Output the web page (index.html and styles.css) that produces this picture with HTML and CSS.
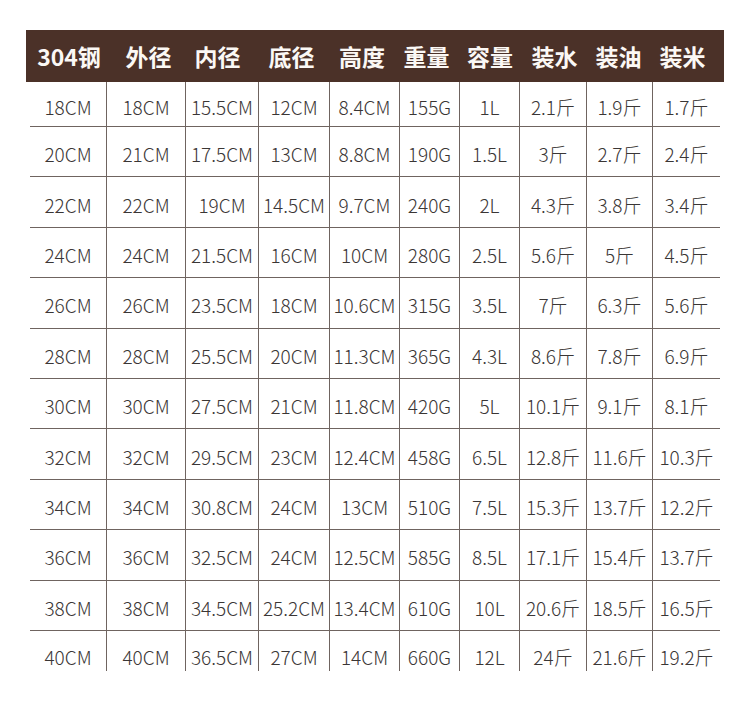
FILE: index.html
```html
<!DOCTYPE html>
<html lang="zh-CN">
<head>
<meta charset="utf-8">
<title>304钢 尺寸表</title>
<link rel="stylesheet" href="styles.css">
</head>
<body>
<div class="page">
  <div class="head">
    <div class="hc">304钢</div>
    <div class="hc">外径</div>
    <div class="hc">内径</div>
    <div class="hc">底径</div>
    <div class="hc">高度</div>
    <div class="hc">重量</div>
    <div class="hc">容量</div>
    <div class="hc">装水</div>
    <div class="hc">装油</div>
    <div class="hc">装米</div>
  </div>
  <div class="body">
    <div class="row first"><div class="c">18CM</div><div class="c">18CM</div><div class="c">15.5CM</div><div class="c">12CM</div><div class="c">8.4CM</div><div class="c">155G</div><div class="c">1L</div><div class="c">2.1斤</div><div class="c">1.9斤</div><div class="c">1.7斤</div></div>
    <div class="row"><div class="c">20CM</div><div class="c">21CM</div><div class="c">17.5CM</div><div class="c">13CM</div><div class="c">8.8CM</div><div class="c">190G</div><div class="c">1.5L</div><div class="c">3斤</div><div class="c">2.7斤</div><div class="c">2.4斤</div></div>
    <div class="row"><div class="c">22CM</div><div class="c">22CM</div><div class="c">19CM</div><div class="c">14.5CM</div><div class="c">9.7CM</div><div class="c">240G</div><div class="c">2L</div><div class="c">4.3斤</div><div class="c">3.8斤</div><div class="c">3.4斤</div></div>
    <div class="row"><div class="c">24CM</div><div class="c">24CM</div><div class="c">21.5CM</div><div class="c">16CM</div><div class="c">10CM</div><div class="c">280G</div><div class="c">2.5L</div><div class="c">5.6斤</div><div class="c">5斤</div><div class="c">4.5斤</div></div>
    <div class="row"><div class="c">26CM</div><div class="c">26CM</div><div class="c">23.5CM</div><div class="c">18CM</div><div class="c">10.6CM</div><div class="c">315G</div><div class="c">3.5L</div><div class="c">7斤</div><div class="c">6.3斤</div><div class="c">5.6斤</div></div>
    <div class="row"><div class="c">28CM</div><div class="c">28CM</div><div class="c">25.5CM</div><div class="c">20CM</div><div class="c">11.3CM</div><div class="c">365G</div><div class="c">4.3L</div><div class="c">8.6斤</div><div class="c">7.8斤</div><div class="c">6.9斤</div></div>
    <div class="row"><div class="c">30CM</div><div class="c">30CM</div><div class="c">27.5CM</div><div class="c">21CM</div><div class="c">11.8CM</div><div class="c">420G</div><div class="c">5L</div><div class="c">10.1斤</div><div class="c">9.1斤</div><div class="c">8.1斤</div></div>
    <div class="row"><div class="c">32CM</div><div class="c">32CM</div><div class="c">29.5CM</div><div class="c">23CM</div><div class="c">12.4CM</div><div class="c">458G</div><div class="c">6.5L</div><div class="c">12.8斤</div><div class="c">11.6斤</div><div class="c">10.3斤</div></div>
    <div class="row"><div class="c">34CM</div><div class="c">34CM</div><div class="c">30.8CM</div><div class="c">24CM</div><div class="c">13CM</div><div class="c">510G</div><div class="c">7.5L</div><div class="c">15.3斤</div><div class="c">13.7斤</div><div class="c">12.2斤</div></div>
    <div class="row"><div class="c">36CM</div><div class="c">36CM</div><div class="c">32.5CM</div><div class="c">24CM</div><div class="c">12.5CM</div><div class="c">585G</div><div class="c">8.5L</div><div class="c">17.1斤</div><div class="c">15.4斤</div><div class="c">13.7斤</div></div>
    <div class="row"><div class="c">38CM</div><div class="c">38CM</div><div class="c">34.5CM</div><div class="c">25.2CM</div><div class="c">13.4CM</div><div class="c">610G</div><div class="c">10L</div><div class="c">20.6斤</div><div class="c">18.5斤</div><div class="c">16.5斤</div></div>
    <div class="row last"><div class="c">40CM</div><div class="c">40CM</div><div class="c">36.5CM</div><div class="c">27CM</div><div class="c">14CM</div><div class="c">660G</div><div class="c">12L</div><div class="c">24斤</div><div class="c">21.6斤</div><div class="c">19.2斤</div></div>
  </div>
</div>
</body>
</html>
```

FILE: styles.css
```css
html, body {
  margin: 0;
  padding: 0;
  background: #ffffff;
}

.page {
  padding: 30px 26px 0 26px;
  width: 698px;
  font-family: "Noto Sans CJK SC", "Noto Sans", sans-serif;
}

.head {
  display: grid;
  grid-template-columns: 86px 73px 65px 83px 58px 71px 56px 73px 55px 73px;
  height: 52px;
  padding-right: 5px;
  background: #4b3128;
  color: #fbf8f5;
  font-size: 23px;
  font-weight: 700;
}

.hc {
  display: flex;
  align-items: center;
  justify-content: center;
  white-space: nowrap;
  line-height: 1;
  padding-top: 1px;
}

.body {
  margin: 0 4px;
  width: 690px;
  color: #3a3635;
  font-size: 19px;
  font-weight: 300;
}

.row {
  display: grid;
  grid-template-columns: 76px 79px 73px 71px 70px 60px 60px 67px 66px 68px;
  height: 50.4px;
  box-sizing: border-box;
  border-bottom: 1px solid #6f6460;
}

.row.first {
  height: 45px;
}

.row.last {
  height: 40px;
  border-bottom: none;
}

.c {
  display: flex;
  align-items: center;
  justify-content: center;
  white-space: nowrap;
  line-height: 1;
  padding-top: 4px;
  box-sizing: border-box;
}

.row.first .c {
  padding-top: 4px;
}

.row.last .c {
  padding-top: 12px;
}

.c + .c {
  border-left: 1px solid #6f6460;
}
```
